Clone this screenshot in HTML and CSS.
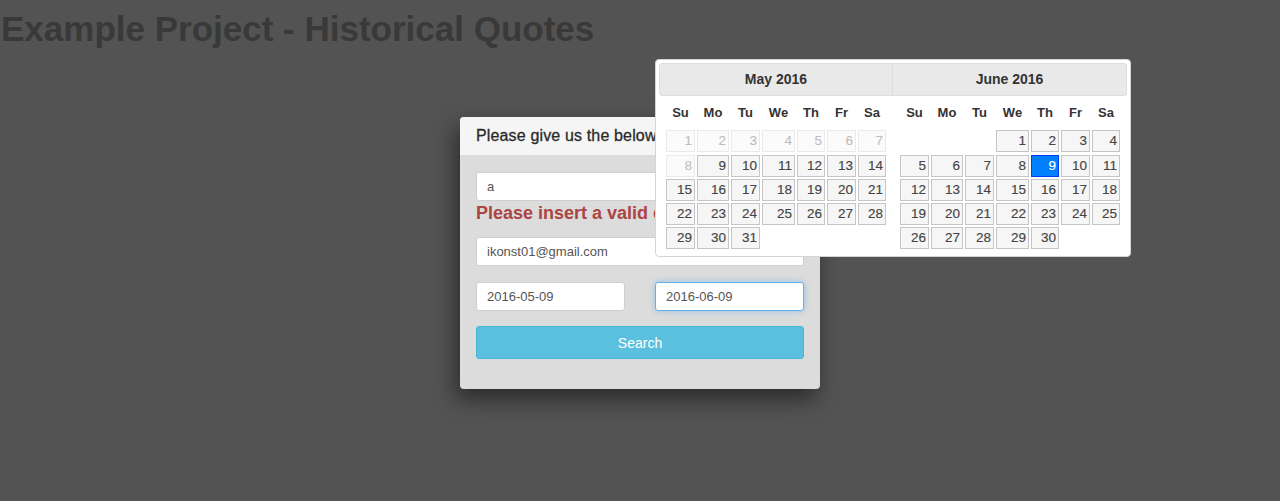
FILE: index.html
```html
<!DOCTYPE html>
<html>
<head>
<meta charset="utf-8">
<link rel="stylesheet" href="styles.css">
</head>
<body>
<h1 class="title">Example Project - Historical Quotes</h1>

<div class="panel">
  <div class="panel-heading">Please give us the below information</div>
  <div class="panel-body">
    <input class="field" type="text" value="a">
    <div class="error">Please insert a valid company symbol</div>
    <input class="field field-email" type="text" value="ikonst01@gmail.com">
    <div class="date-row">
      <input class="field" type="text" value="2016-05-09">
      <input class="field focus" type="text" value="2016-06-09">
    </div>
    <button class="btn-search">Search</button>
  </div>
</div>

<div class="datepicker">
  <div class="group">
    <div class="dp-header first">May 2016</div>
    <div class="days">
      <div class="dow">Su</div><div class="dow">Mo</div><div class="dow">Tu</div><div class="dow">We</div><div class="dow">Th</div><div class="dow">Fr</div><div class="dow">Sa</div>
      <div class="d off">1</div><div class="d off">2</div><div class="d off">3</div><div class="d off">4</div><div class="d off">5</div><div class="d off">6</div><div class="d off">7</div>
      <div class="d off">8</div><div class="d">9</div><div class="d">10</div><div class="d">11</div><div class="d">12</div><div class="d">13</div><div class="d">14</div>
      <div class="d">15</div><div class="d">16</div><div class="d">17</div><div class="d">18</div><div class="d">19</div><div class="d">20</div><div class="d">21</div>
      <div class="d">22</div><div class="d">23</div><div class="d">24</div><div class="d">25</div><div class="d">26</div><div class="d">27</div><div class="d">28</div>
      <div class="d">29</div><div class="d">30</div><div class="d">31</div>
    </div>
  </div>
  <div class="group">
    <div class="dp-header last">June 2016</div>
    <div class="days">
      <div class="dow">Su</div><div class="dow">Mo</div><div class="dow">Tu</div><div class="dow">We</div><div class="dow">Th</div><div class="dow">Fr</div><div class="dow">Sa</div>
      <div class="empty"></div><div class="empty"></div><div class="empty"></div><div class="d">1</div><div class="d">2</div><div class="d">3</div><div class="d">4</div>
      <div class="d">5</div><div class="d">6</div><div class="d">7</div><div class="d">8</div><div class="d sel">9</div><div class="d">10</div><div class="d">11</div>
      <div class="d">12</div><div class="d">13</div><div class="d">14</div><div class="d">15</div><div class="d">16</div><div class="d">17</div><div class="d">18</div>
      <div class="d">19</div><div class="d">20</div><div class="d">21</div><div class="d">22</div><div class="d">23</div><div class="d">24</div><div class="d">25</div>
      <div class="d">26</div><div class="d">27</div><div class="d">28</div><div class="d">29</div><div class="d">30</div>
    </div>
  </div>
</div>
</body>
</html>
```

FILE: styles.css
```css
html, body {
  margin: 0;
  padding: 0;
}
body {
  background: #535353;
  font-family: "Liberation Sans", Arial, Helvetica, sans-serif;
  color: #333;
  height: 501px;
  overflow: hidden;
}
.title {
  margin: 0;
  padding: 9px 0 0 1px;
  font-size: 35px;
  line-height: 40px;
  font-weight: bold;
  color: #393939;
}

.panel {
  width: 360px;
  margin: 68px auto 0;
  background: #dcdcdc;
  border-radius: 4px;
  box-shadow: -4px 10px 22px rgba(0, 0, 0, 0.5);
  overflow: hidden;
}
.panel-heading {
  background: #f5f5f5;
  height: 38px;
  box-sizing: border-box;
  padding: 0 16px;
  font-size: 16px;
  line-height: 38px;
  letter-spacing: 0.15px;
  color: #2a2a2a;
  -webkit-text-stroke: 0.3px #2a2a2a;
  white-space: nowrap;
  overflow: hidden;
}
.panel-body {
  display: flex;
  flex-direction: column;
  padding: 17px 16px 30px;
}
.field {
  display: block;
  width: 100%;
  min-width: 0;
  height: 29px;
  box-sizing: border-box;
  margin: 0;
  padding: 0 10px;
  border: 1px solid #cfcfcf;
  border-radius: 3px;
  background: #fff;
  font-family: "Liberation Sans", Arial, sans-serif;
  font-size: 13px;
  color: #555;
  outline: none;
}
.error {
  margin-top: 2px;
  font-size: 18px;
  font-weight: bold;
  line-height: 20px;
  color: #ab4442;
  white-space: nowrap;
  overflow: hidden;
}
.field-email {
  margin-top: 14px;
}
.date-row {
  display: flex;
  gap: 30px;
  margin-top: 16px;
}
.date-row .field {
  flex: 1 1 0;
  width: auto;
}
.field.focus {
  border-color: #66afe9;
  box-shadow: 0 0 6px rgba(102, 175, 233, 0.6);
}
.btn-search {
  margin-top: 15px;
  height: 33px;
  border: 1px solid #46b8da;
  border-radius: 3px;
  background: #5bc0de;
  color: #fff;
  font-family: "Liberation Sans", Arial, sans-serif;
  font-size: 14px;
  padding-top: 1px;
}

/* datepicker overlay */
.datepicker {
  position: absolute;
  left: 655px;
  top: 59px;
  width: 468px;
  padding: 3px;
  border: 1px solid #d4d4d4;
  border-radius: 4px;
  background: #fff;
  display: flex;
}
.group {
  width: 234px;
  padding-bottom: 4px;
}
.dp-header {
  height: 33px;
  box-sizing: border-box;
  border: 1px solid #dddddd;
  background: #e9e9e9;
  text-align: center;
  font-size: 14px;
  font-weight: bold;
  line-height: 31px;
  color: #333;
}
.dp-header.first {
  border-radius: 3px 0 0 3px;
}
.dp-header.last {
  border-left-width: 0;
  border-radius: 0 3px 3px 0;
}
.days {
  display: grid;
  grid-template-columns: 29px 32px 29px 33px 28px 29px 28px;
  grid-template-rows: 32px repeat(5, 22px);
  column-gap: 2px;
  row-gap: 2.25px;
  padding: 0 7px;
}
.dow {
  text-align: center;
  font-size: 13px;
  font-weight: bold;
  line-height: 33px;
  color: #333;
}
.d {
  box-sizing: border-box;
  border: 1px solid #c5c5c5;
  background: #f6f6f6;
  color: #454545;
  font-size: 13.5px;
  line-height: 20px;
  text-align: right;
  padding-right: 2px;
  -webkit-text-stroke: 0.15px #454545;
}
.d.off {
  opacity: 0.35;
}
.d.sel {
  background: #007fff;
  border-color: #003eff;
  color: #fff;
  -webkit-text-stroke: 0.15px #fff;
}
```
